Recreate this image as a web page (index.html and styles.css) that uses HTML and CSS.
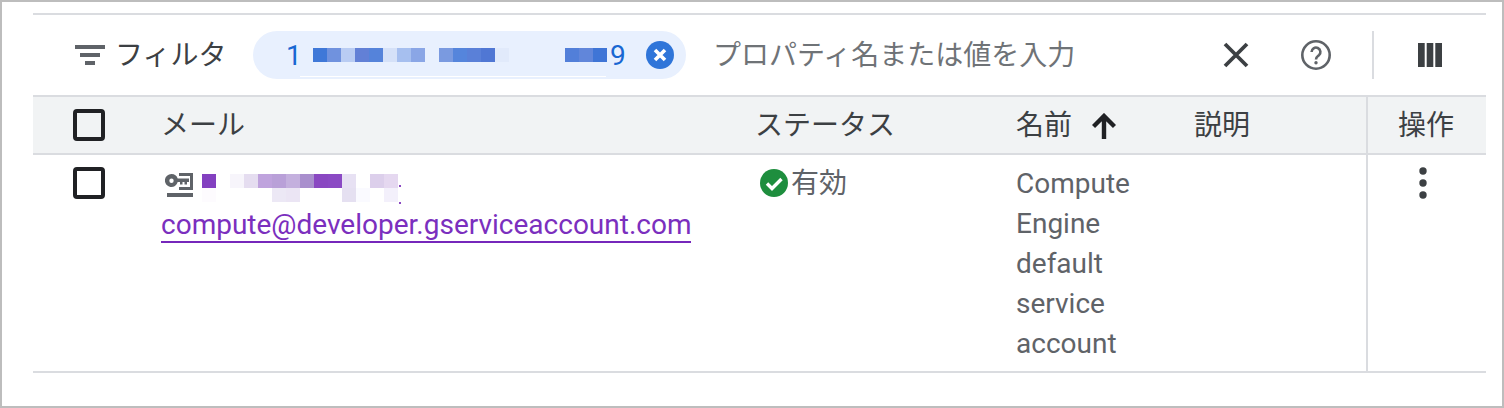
FILE: index.html
```html
<!DOCTYPE html>
<html lang="ja">
<head>
    <meta charset="UTF-8">
    <title>サービス アカウント</title>
    <link rel="stylesheet" href="styles.css">
</head>
<body>
    <div class="frame">
        <div class="panel">
            <!-- Filter bar -->
            <div class="toolbar">
                <svg class="filter-icon" viewBox="0 0 30 20"><path d="M0 0h30v4H0zM5 8h20v4H5zM10 16h10v4H10z"/></svg>
                <span class="filter-label">フィルタ</span>
                <div class="chip">
                    <span class="chip-digit">1</span>
                    <div class="mosaic chip-mosaic">
                        <i class="b1"></i><i class="b2"></i><i class="b3"></i><i class="b4"></i><i class="b5"></i><i class="b6"></i><i class="b7"></i><i class="b8"></i><i></i><i class="b9"></i><i class="b10"></i><i class="b11"></i><i class="b12"></i><i class="b13"></i><i></i><i></i><i></i><i></i><i class="b14"></i><i class="b15"></i><i class="b16"></i>
                    </div>
                    <span class="chip-digit">9</span>
                    <svg class="chip-close" viewBox="0 0 28 28"><circle cx="14" cy="14" r="14" fill="#2f75d9"/><path d="M9 9l10 10M19 9L9 19" stroke="#fff" stroke-width="3.600" fill="none"/></svg>
                </div>
                <input class="filter-input" type="text" placeholder="プロパティ名または値を入力">
                <svg class="close-icon" viewBox="0 0 26 26"><path d="M2 2l22 22M24 2L2 24" stroke="#3c4043" stroke-width="3.800" fill="none"/></svg>
                <svg class="help-icon" viewBox="0 0 30 30"><circle cx="15" cy="15" r="13.700" fill="none" stroke="#5f6368" stroke-width="2.600"/><path d="M10.600 12a4.400 4.400 0 1 1 7.300 3.300c-1.700 1.400-2.900 2-2.900 4.200" fill="none" stroke="#5f6368" stroke-width="2.600"/><circle cx="15" cy="22.800" r="1.700" fill="#5f6368"/></svg>
                <span class="divider"></span>
                <svg class="columns-icon" viewBox="0 0 24 24"><path d="M0 0h6.700v24H0zM8.700 0h6.600v24H8.700zM17.300 0H24v24h-6.700z"/></svg>
            </div>

            <!-- Table -->
            <div class="table-row table-head">
                <div class="cell-check"><span class="checkbox"></span></div>
                <div>メール</div>
                <div class="status-head">ステータス</div>
                <div class="name-head">名前
                    <svg class="sort-icon" viewBox="0 0 24 26"><path d="M12 26V3M1.500 13.500L12 3l10.500 10.500" fill="none" stroke="#202124" stroke-width="4.400"/></svg>
                </div>
                <div class="desc-head">説明</div>
                <div class="cell-action">操作</div>
            </div>
            <div class="table-row table-body">
                <div class="cell-check"><span class="checkbox"></span></div>
                <div class="cell-email">
                    <div class="account-id">
                        <svg class="key-icon" viewBox="0 0 28 24"><path fill="#5f6368" fill-rule="evenodd" d="M14 0h14v17H14v-3h11V3H14zM6.500 1a6.500 6.500 0 0 1 6.200 4.500H24v3.500h-2v2.500h-2.500V9h-2v2.500H15V9h-2.300A6.500 6.500 0 1 1 6.500 1zm0 4.500a2.200 2.200 0 1 0 0 4.400 2.200 2.200 0 0 0 0-4.400zM2 20h26v4H2z"/></svg>
                        <div class="mosaic account-mosaic">
                            <i class="p1"></i><i></i><i class="p2"></i><i class="p3"></i><i class="p4"></i><i class="p5"></i><i class="p6"></i><i class="p7"></i><i class="p8"></i><i class="p9"></i><i class="p10"></i><i></i><i class="p11"></i><i class="p12"></i>
                            <i class="p13"></i><i></i><i></i><i></i><i></i><i class="p14"></i><i class="p15"></i><i></i><i></i><i></i><i class="p16"></i><i class="p17"></i><i></i><i class="p18"></i>
                        </div>
                    </div>
                    <a class="email-link" href="#">compute@developer.gserviceaccount.com</a>
                </div>
                <div class="cell-status">
                    <svg class="status-icon" viewBox="0 0 28 28"><circle cx="14" cy="14" r="14" fill="#1e8e3e"/><path d="M7 14.500l5 5 9.500-9.500" fill="none" stroke="#fff" stroke-width="3.400"/></svg>
                    <span>有効</span>
                </div>
                <div class="cell-name">Compute Engine default service account</div>
                <div></div>
                <div class="cell-action">
                    <svg class="more-icon" viewBox="0 0 8 32"><circle cx="4" cy="4" r="3.700"/><circle cx="4" cy="16" r="3.700"/><circle cx="4" cy="28" r="3.700"/></svg>
                </div>
            </div>
        </div>
    </div>
</body>
</html>
```

FILE: styles.css
```css
* {
    box-sizing: border-box;
}

body {
    margin: 0;
    background-color: #fff;
    font-family: Roboto, "Noto Sans CJK JP", sans-serif;
}

.frame {
    height: 408px;
    border: 2px solid #bdbdbd;
    padding: 11px 16px 0 31px;
}

.panel {
    border-top: 2px solid #dadce0;
}

/* Filter bar */
.toolbar {
    display: flex;
    align-items: center;
    height: 80px;
}

.filter-icon {
    width: 30px;
    height: 20px;
    margin-left: 42px;
    fill: #5f6368;
}

.filter-label {
    width: 138px;
    margin-left: 10px;
    padding-bottom: 4px;
    font-size: 28px;
    color: #3c4043;
}

.chip {
    position: relative;
    display: flex;
    align-items: center;
    width: 433px;
    height: 48px;
    padding-left: 33px;
    border-radius: 24px;
    background-color: #e8f0fe;
}

/* edge left by the blurred part of the screenshot */
.chip::after {
    content: "";
    position: absolute;
    left: 47px;
    top: 45px;
    width: 306px;
    height: 1px;
    background-color: #fff;
}

.chip-digit {
    width: 16px;
    font-size: 28px;
    color: #1967d2;
}

.mosaic {
    display: grid;
    grid-auto-rows: 14px;
}

.chip-mosaic {
    grid-template-columns: repeat(21, 14px);
    margin: 0 3px 0 11px;
}

.chip-close {
    width: 28px;
    height: 28px;
    margin-left: 20px;
}

.b1 { background-color: #3f78d8; }
.b2 { background-color: #7092de; }
.b3 { background-color: #b9ccf3; }
.b4 { background-color: #6280d6; }
.b5 { background-color: #5583da; }
.b6 { background-color: #d5e1f8; }
.b7 { background-color: #a6bfef; }
.b8 { background-color: #8aa6e6; }
.b9 { background-color: #7a9ae0; }
.b10 { background-color: #5585dc; }
.b11 { background-color: #5a80d8; }
.b12 { background-color: #5077d4; }
.b13 { background-color: #e1eafb; }
.b14 { background-color: #527fd9; }
.b15 { background-color: #6186da; }
.b16 { background-color: #3f75d6; }

.filter-input {
    flex: 1;
    min-width: 0;
    margin-left: 27px;
    padding: 0;
    border: none;
    outline: none;
    font-family: inherit;
    font-size: 28px;
    color: #5f6368;
}

.filter-input::placeholder {
    color: #6f7377;
    opacity: 1;
}

.close-icon {
    width: 26px;
    height: 26px;
}

.help-icon {
    width: 30px;
    height: 30px;
    margin-left: 52px;
}

.divider {
    width: 2px;
    height: 48px;
    margin-left: 41px;
    background-color: #dadce0;
}

.columns-icon {
    width: 24px;
    height: 24px;
    margin: 0 44px 0 44px;
    fill: #3c4043;
}

/* Table */
.table-row {
    display: grid;
    grid-template-columns: 128px 596px 259px 179px 171px 120px;
    width: 1453px;
}

.table-head {
    height: 60px;
    align-items: center;
    border-top: 2px solid #dadce0;
    border-bottom: 2px solid #dadce0;
    background-color: #f1f3f4;
    font-size: 28px;
    color: #3c4043;
}

.table-head > div {
    padding-bottom: 4px;
}

.table-head > .cell-check {
    padding-bottom: 0;
}

.status-head {
    margin-left: -2px;
}

.desc-head {
    margin-left: -1px;
}

.table-body {
    height: 218px;
    border-bottom: 2px solid #dadce0;
    font-size: 28px;
    line-height: 40px;
    color: #5f6368;
}

.cell-check {
    padding-left: 40px;
}

.checkbox {
    display: block;
    width: 32px;
    height: 32px;
    border: 4px solid #202124;
    border-radius: 4px;
}

.table-body .cell-check {
    padding-top: 12px;
}

.name-head {
    display: flex;
    align-items: center;
    gap: 20px;
}

.sort-icon {
    width: 24px;
    height: 26px;
    margin-top: 6px;
}

.table-head > .cell-action {
    padding-right: 2px;
}

.cell-action {
    height: 100%;
    display: flex;
    align-items: center;
    justify-content: center;
    border-left: 2px solid #dadce0;
    padding-right: 8px;
}

.table-body .cell-action {
    align-items: flex-start;
    padding-top: 12px;
}

.cell-email {
    padding-top: 13px;
    min-width: 0;
}

.account-id {
    display: flex;
    align-items: flex-start;
    height: 37px;
    margin-left: 4px;
}

/* two specks at the edge of the blurred address */
.account-id::after {
    content: "";
    width: 2px;
    height: 2px;
    margin-top: 17px;
    background-color: #8a48c2;
    box-shadow: 0 17px 0 #8a48c2;
}

.key-icon {
    width: 28px;
    height: 24px;
    margin: 5px 9px 0 0;
}

.account-mosaic {
    grid-template-columns: repeat(14, 14px);
    margin: 6px 1px 0 0;
}

.p1 { background-color: #8340c0; }
.p2 { background-color: #f7f5fb; }
.p3 { background-color: #e5ddf0; }
.p4 { background-color: #bfa3dd; }
.p5 { background-color: #b9a0d8; }
.p6 { background-color: #c4b0de; }
.p7 { background-color: #a98fcd; }
.p8 { background-color: #8a48c2; }
.p9 { background-color: #8b4ac4; }
.p10 { background-color: #e7e1f3; }
.p11 { background-color: #dccfeb; }
.p12 { background-color: #e5d8f0; }
.p13 { background-color: #fdfbfe; }
.p14 { background-color: #ece8f5; }
.p15 { background-color: #ebe5f4; }
.p16 { background-color: #e5e0f1; }
.p17 { background-color: #fafaff; }
.p18 { background-color: #f3f0fb; }

.email-link {
    display: inline-block;
    line-height: 32px;
    border-bottom: 2px solid #7627bb;
    color: #7b2fbe;
    text-decoration: none;
    white-space: nowrap;
}

.cell-status {
    display: flex;
    align-items: flex-start;
    padding: 14px 0 0 3px;
}

.status-icon {
    width: 28px;
    height: 28px;
    margin-right: 3px;
}

.cell-status span {
    line-height: 30px;
}

.cell-name {
    width: 130px;
    padding-top: 9px;
}

.more-icon {
    width: 8px;
    height: 32px;
    fill: #3c4043;
}
```
